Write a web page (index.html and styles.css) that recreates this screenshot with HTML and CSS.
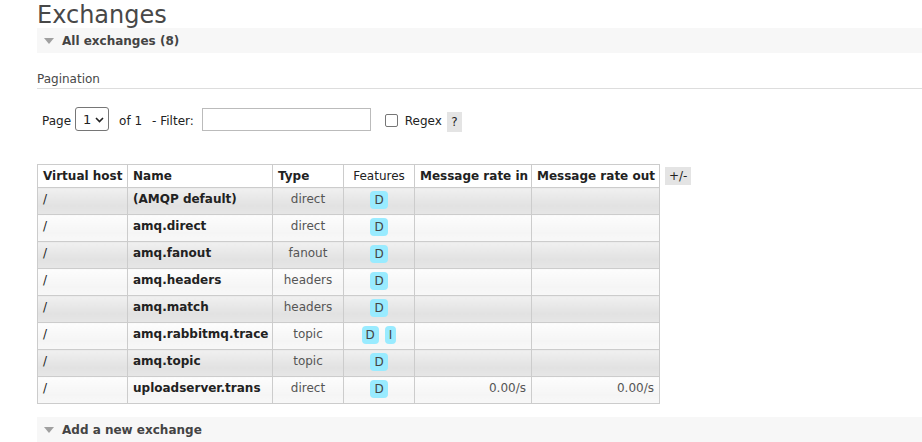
FILE: index.html
```html
<!DOCTYPE html>
<html>
<head>
<meta charset="utf-8">
<title>Exchanges</title>
<link rel="stylesheet" href="styles.css">
</head>
<body>
<div class="main">
  <h1 class="title">Exchanges</h1>
  <div class="section-head"><span class="tri"></span>All exchanges (8)</div>
  <h3 class="sub">Pagination</h3>
  <div class="pager">
    <span class="lbl">Page</span>
    <span class="select">1<svg width="9" height="6" viewBox="0 0 9 6"><path d="M1 1l3.5 3.5L8 1" fill="none" stroke="#222" stroke-width="1.6"/></svg></span>
    <span class="of">of 1</span>
    <span class="lbl">- Filter:</span>
    <span class="input"></span>
    <span class="check"></span>
    <span class="lbl">Regex</span>
    <span class="help">?</span>
  </div>
  <div class="table-row">
    <table class="list">
      <colgroup>
        <col class="c-vh"><col class="c-name"><col class="c-type"><col class="c-feat"><col class="c-in"><col class="c-out">
      </colgroup>
      <thead>
        <tr><th>Virtual host</th><th>Name</th><th>Type</th><th class="plain c">Features</th><th>Message rate in</th><th>Message rate out</th></tr>
      </thead>
      <tbody>
        <tr class="alt1"><td>/</td><td class="nm">(AMQP default)</td><td class="c">direct</td><td class="c f"><span class="badge">D</span></td><td class="r"></td><td class="r"></td></tr>
        <tr class="alt2"><td>/</td><td class="nm">amq.direct</td><td class="c">direct</td><td class="c f"><span class="badge">D</span></td><td class="r"></td><td class="r"></td></tr>
        <tr class="alt1"><td>/</td><td class="nm">amq.fanout</td><td class="c">fanout</td><td class="c f"><span class="badge">D</span></td><td class="r"></td><td class="r"></td></tr>
        <tr class="alt2"><td>/</td><td class="nm">amq.headers</td><td class="c">headers</td><td class="c f"><span class="badge">D</span></td><td class="r"></td><td class="r"></td></tr>
        <tr class="alt1"><td>/</td><td class="nm">amq.match</td><td class="c">headers</td><td class="c f"><span class="badge">D</span></td><td class="r"></td><td class="r"></td></tr>
        <tr class="alt2"><td>/</td><td class="nm">amq.rabbitmq.trace</td><td class="c">topic</td><td class="c f"><span class="badge">D</span><span class="badge gap">I</span></td><td class="r"></td><td class="r"></td></tr>
        <tr class="alt1"><td>/</td><td class="nm">amq.topic</td><td class="c">topic</td><td class="c f"><span class="badge">D</span></td><td class="r"></td><td class="r"></td></tr>
        <tr class="alt2"><td>/</td><td class="nm">uploadserver.trans</td><td class="c">direct</td><td class="c f"><span class="badge">D</span></td><td class="r">0.00/s</td><td class="r">0.00/s</td></tr>
      </tbody>
    </table>
    <span class="toggle">+/-</span>
  </div>
  <div class="section-head add"><span class="tri"></span>Add a new exchange</div>
</div>
</body>
</html>
```
FILE: styles.css
```css
html, body {
  margin: 0;
  padding: 0;
  background: #fff;
}
body {
  font-family: "DejaVu Sans", Verdana, sans-serif;
  font-size: 12px;
  color: #484848;
  overflow: hidden;
}
.main {
  padding-left: 37px;
}
.title {
  margin: 0;
  padding-top: 2px;
  font-size: 24px;
  line-height: 26px;
  font-weight: normal;
  color: #484848;
  height: 26px;
}
.section-head {
  height: 25px;
  background: #f7f7f7;
  display: flex;
  align-items: center;
  font-weight: bold;
  font-size: 12px;
  color: #444;
  padding-left: 7px;
}
.tri {
  width: 0;
  height: 0;
  border-left: 5px solid transparent;
  border-right: 5px solid transparent;
  border-top: 6px solid #a0a0a0;
  margin-right: 8px;
  margin-top: 1px;
}
.sub {
  margin: 18px 0 0 0;
  font-size: 12px;
  font-weight: normal;
  line-height: 16px;
  padding-bottom: 1px;
  border-bottom: 1px solid #ddd;
  color: #484848;
}
.pager {
  display: flex;
  align-items: center;
  margin-top: 18px;
  padding-left: 5px;
  height: 24px;
  color: #222;
  font-size: 12px;
}
.pager .lbl, .pager .of {
  padding-top: 3px;
}
.select {
  box-sizing: border-box;
  width: 34px;
  height: 24px;
  border: 1px solid #767676;
  border-radius: 3px;
  margin-left: 4px;
  display: flex;
  align-items: center;
  justify-content: space-between;
  padding: 1px 4px 0 7px;
  font-size: 13px;
}
.of {
  margin-left: 10px;
  margin-right: 10px;
}
.input {
  box-sizing: border-box;
  width: 169px;
  height: 23px;
  border: 1px solid #bbb;
  margin-left: 8px;
}
.check {
  box-sizing: border-box;
  width: 13px;
  height: 13px;
  border: 1px solid #767676;
  border-radius: 2px;
  margin-left: 14px;
  margin-right: 7px;
  margin-top: 3px;
}
.help {
  background: #e4e4e4;
  width: 15px;
  height: 20px;
  display: flex;
  align-items: center;
  justify-content: center;
  margin-left: 5px;
  margin-top: 5px;
}
.table-row {
  display: flex;
  align-items: flex-start;
  margin-top: 33px;
}
table.list {
  border-collapse: collapse;
  table-layout: fixed;
  width: 623px;
  color: #222;
}
.c-vh { width: 90px; }
.c-name { width: 145px; }
.c-type { width: 71px; }
.c-feat { width: 71px; }
.c-in { width: 117px; }
.c-out { width: 128px; }
table.list th, table.list td {
  border: 1px solid #ccc;
  padding: 4px 5px;
  line-height: 15px;
  text-align: left;
  vertical-align: top;
  white-space: nowrap;
  overflow: hidden;
}
table.list th {
  font-weight: bold;
  background: #fff;
  height: 15px;
  padding-top: 4px;
  padding-bottom: 3px;
}
table.list th.plain {
  font-weight: normal;
}
table.list td {
  height: 18px;
}
table.list .c { text-align: center; }
table.list .r { text-align: right; color: #555; }
table.list td.c { color: #555; }
table.list td.nm { font-weight: bold; }
table.list td.f { padding-top: 3px; padding-bottom: 5px; height: 18px; }
tr.alt1 td {
  background: linear-gradient(to bottom, #f0f0f0 0%, #e2e2e2 65%, #e6e6e6 100%);
}
tr.alt2 td {
  background: linear-gradient(to bottom, #fdfdfd 0%, #f5f5f5 65%, #f8f8f8 100%);
}
.badge {
  display: inline-block;
  background: #99ebff;
  color: #444;
  border-radius: 4px;
  padding: 0 4px;
  height: 18px;
  line-height: 18px;
  text-align: center;
  font-weight: normal;
  vertical-align: top;
}
.badge.gap {
  margin-left: 6px;
}
.toggle {
  margin-left: 5px;
  margin-top: 3px;
  background: #e4e4e4;
  padding: 0 4px;
  line-height: 18px;
  color: #222;
}
.add {
  margin-top: 13px;
}
```
